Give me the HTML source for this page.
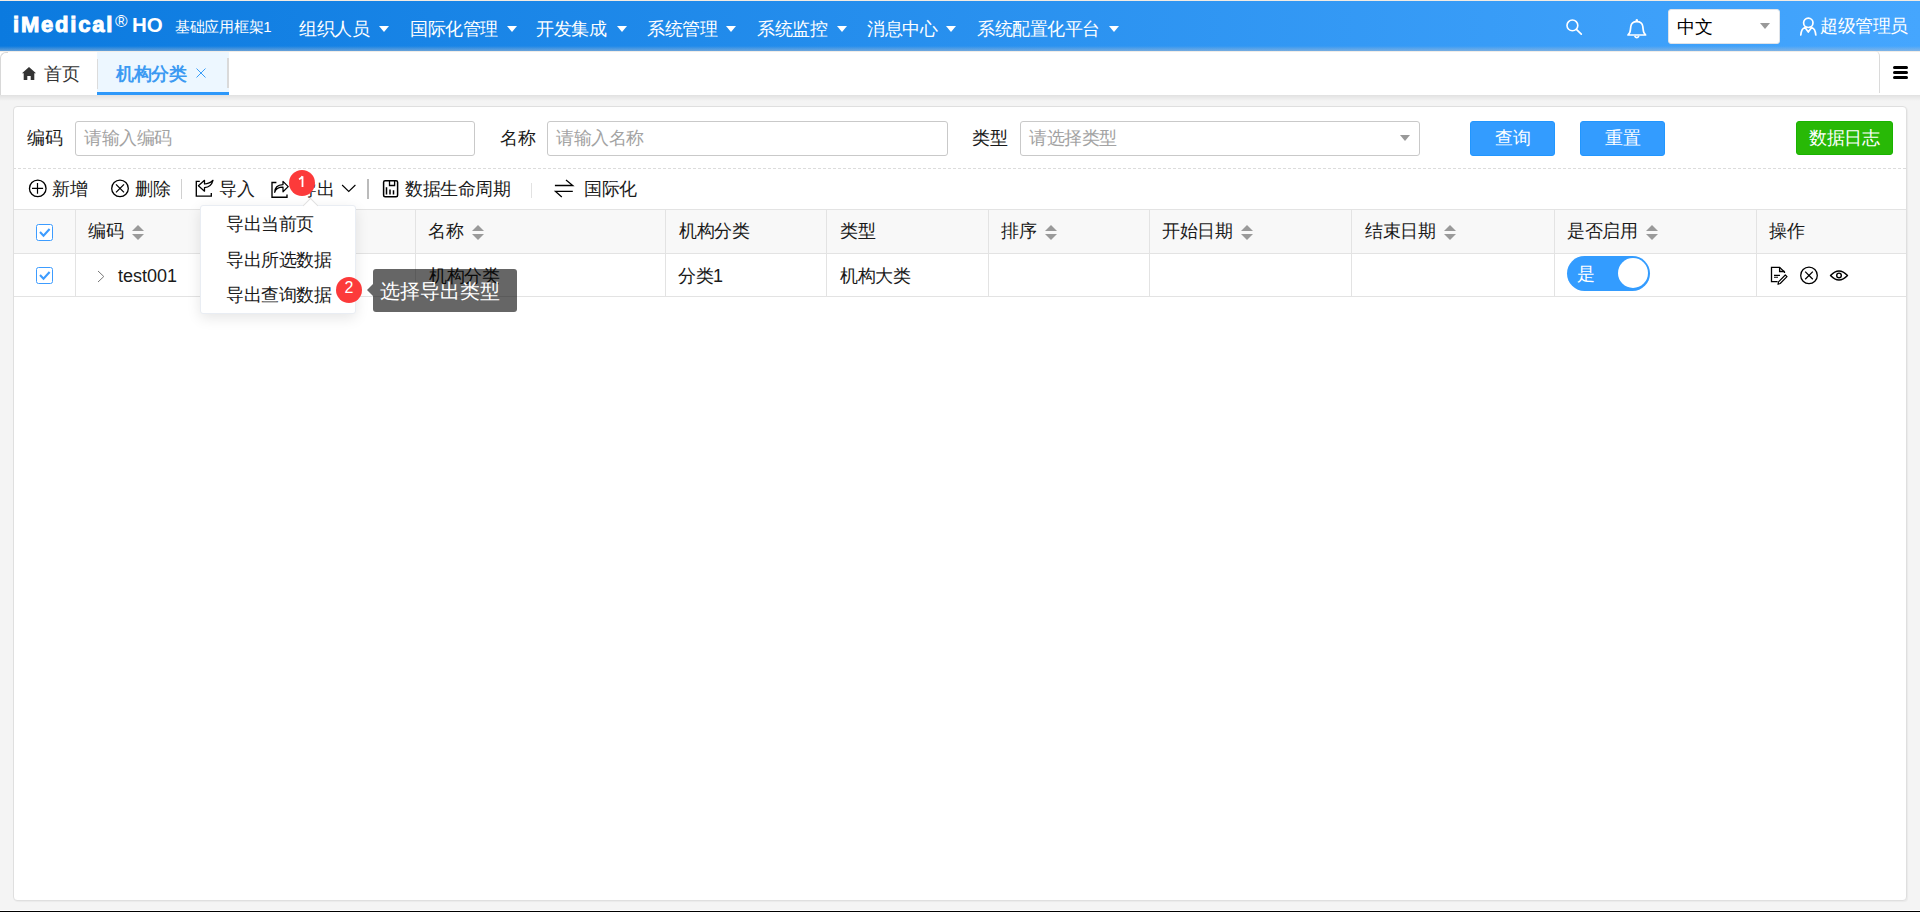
<!DOCTYPE html>
<html><head><meta charset="utf-8">
<style>
*{box-sizing:border-box;margin:0;padding:0}
html,body{width:1920px;height:912px;overflow:hidden}
body{position:relative;background:#f4f4f4;font-family:"Liberation Sans",sans-serif;color:#1a1a1a;font-size:18px}
.a{position:absolute;white-space:nowrap;line-height:1;letter-spacing:-0.5px}
.w{color:#fff}
svg{position:absolute;overflow:visible}
#topline{left:0;top:0;width:1920px;height:1px;background:#f2ebe3}
#hdr{left:0;top:1px;width:1920px;height:50px;background:linear-gradient(to right,#0b7adf,#45a6fe)}
#hdrshade{left:0;top:46px;width:1920px;height:5px;background:linear-gradient(to bottom,rgba(190,195,205,0),rgba(190,195,205,.5))}
.tri{position:absolute;width:0;height:0;border-left:5px solid transparent;border-right:5px solid transparent;border-top:6px solid #fff}
#tabbar{left:0;top:51px;width:1920px;height:44px;background:#fff}
#tabshadow{left:0;top:95px;width:1920px;height:6px;background:linear-gradient(to bottom,rgba(0,0,0,.08),rgba(0,0,0,0))}
#card{left:13px;top:106px;width:1894px;height:795px;background:#fff;border:1px solid #dfdfdf;border-radius:4px;box-shadow:1px 1px 1px rgba(0,0,0,.04)}
#bottomw{left:0;top:910px;width:1920px;height:1px;background:#fff}
#bottomb{left:0;top:911px;width:1920px;height:1px;background:#000}
.inp{position:absolute;height:35px;top:121px;border:1px solid #c9c9c9;border-radius:3px;background:#fff}
.ph{color:#a3a3a3}
.btn{position:absolute;top:121px;height:35px;border-radius:3px;background:#339cff;border:1px solid #2196ff}
.sep{position:absolute;width:1px;background:#d0d0d0}
.th{position:absolute;top:222px}
.sort{position:absolute;width:12px;height:15px;top:225px}
.sort:before{content:"";position:absolute;left:0;top:0;border-left:6px solid transparent;border-right:6px solid transparent;border-bottom:6px solid #9a9a9a}
.sort:after{content:"";position:absolute;left:0;top:9px;border-left:6px solid transparent;border-right:6px solid transparent;border-top:6px solid #9a9a9a}
.vl{position:absolute;width:1px;background:#e3e3e3}
.cb{position:absolute;left:36px;width:17px;height:17px;border:1.5px solid #3d9cff;border-radius:2.5px;background:#fff}
</style></head><body>
<div id="topline" class="a"></div>
<div id="hdr" class="a"></div>
<div id="hdrshade" class="a"></div>

<!-- logo -->
<div class="a w" style="left:13px;top:14px;font-size:22px;font-weight:bold;letter-spacing:1.8px;-webkit-text-stroke:1px #fff">iMedical</div>
<div class="a w" style="left:115px;top:13px;font-size:17px;letter-spacing:0">&#174;</div>
<div class="a w" style="left:132px;top:15px;font-size:20.5px;font-weight:bold;letter-spacing:0">HO</div>
<div class="a w" style="left:175px;top:19px;font-size:15px;letter-spacing:-0.3px">基础应用框架1</div>

<!-- menu -->
<div class="a w" style="left:299px;top:20px">组织人员</div><div class="tri" style="left:379px;top:26px"></div>
<div class="a w" style="left:410px;top:20px">国际化管理</div><div class="tri" style="left:507px;top:26px"></div>
<div class="a w" style="left:536px;top:20px">开发集成</div><div class="tri" style="left:617px;top:26px"></div>
<div class="a w" style="left:647px;top:20px">系统管理</div><div class="tri" style="left:726px;top:26px"></div>
<div class="a w" style="left:757px;top:20px">系统监控</div><div class="tri" style="left:837px;top:26px"></div>
<div class="a w" style="left:867px;top:20px">消息中心</div><div class="tri" style="left:946px;top:26px"></div>
<div class="a w" style="left:977px;top:20px">系统配置化平台</div><div class="tri" style="left:1109px;top:26px"></div>

<!-- search icon -->
<svg style="left:1560px;top:15px" width="30" height="25" viewBox="0 0 30 25">
<circle cx="12.4" cy="10.4" r="5.4" fill="none" stroke="#fff" stroke-width="1.6"/>
<line x1="16.4" y1="14.4" x2="21.3" y2="19.2" stroke="#fff" stroke-width="1.7" stroke-linecap="round"/>
</svg>
<!-- bell -->
<svg style="left:1620px;top:15.8px" width="30" height="25" viewBox="0 0 30 25">
<path d="M8 19 L9.8 16.5 C10.5 14 10.6 12 10.8 10.5 C11.2 7.5 13.5 5.6 16.8 5.6 C20.1 5.6 22.4 7.5 22.8 10.5 C23 12 23.1 14 23.8 16.5 L25.6 19 Z" fill="none" stroke="#fff" stroke-width="1.7" stroke-linejoin="round"/>
<path d="M14.6 20 Q16.8 23.2 19 20" fill="none" stroke="#fff" stroke-width="1.6"/>
<circle cx="16.8" cy="4.2" r="1.2" fill="#fff"/>
</svg>
<!-- lang select -->
<div class="a" style="left:1668px;top:9px;width:112px;height:35px;background:#fff;border:1px solid #dfe3e8;border-radius:3px"></div>
<div class="a" style="left:1677px;top:18px;color:#000">中文</div>
<div class="a" style="left:1760px;top:23px;width:0;height:0;border-left:5px solid transparent;border-right:5px solid transparent;border-top:6px solid #999"></div>
<!-- user -->
<svg style="left:1795px;top:14px" width="26" height="25" viewBox="0 0 26 25">
<circle cx="13.3" cy="8.8" r="4.7" fill="none" stroke="#fff" stroke-width="1.7"/>
<path d="M5.8 21 C6.2 16.5 8 14 10 13.5 L13.3 18 L16.6 13.5 C18.6 14 20.4 16.5 20.8 21" fill="none" stroke="#fff" stroke-width="1.7" stroke-linecap="round" stroke-linejoin="round"/>
</svg>
<div class="a w" style="left:1820px;top:17px">超级管理员</div>

<!-- tabbar -->
<div id="tabbar" class="a"></div>
<div id="tabshadow" class="a"></div>
<div class="a" style="left:0;top:51px;width:1920px;height:1px;background:#f1ede8"></div>
<div class="a" style="left:0;top:52px;width:8px;height:43px;border-left:1px solid #d8d8d8;border-top:1px solid #d8d8d8;border-top-left-radius:6px"></div>
<svg style="left:21px;top:66px" width="16" height="15" viewBox="0 0 16 15">
<path d="M1 7.2 L8 1 L15 7.2 L13.3 7.2 L13.3 14 L9.7 14 L9.7 10 L6.3 10 L6.3 14 L2.7 14 L2.7 7.2 Z" fill="#333"/>
</svg>
<div class="a" style="left:44px;top:65px;color:#333">首页</div>
<div class="a" style="left:97px;top:52px;width:132px;height:43px;background:#edf7ff;border-bottom:3px solid #2d98fa"></div>
<div class="a" style="left:97px;top:59px;width:1px;height:30px;background:#dcdcdc"></div>
<div class="a" style="left:227px;top:58px;width:2px;height:30px;background:#dadada"></div>
<div class="a" style="left:116px;top:65px;color:#3c9af2;font-weight:bold">机构分类</div>
<svg style="left:195px;top:67px" width="12" height="12" viewBox="0 0 12 12">
<path d="M1.5 1.5 L10.5 10.5 M10.5 1.5 L1.5 10.5" stroke="#3a9ef8" stroke-width="1"/>
</svg>
<div class="a" style="left:1871px;top:51px;width:9px;height:42px;border-right:1px solid #dadada;border-top-right-radius:5px"></div>
<div class="a" style="left:1893px;top:66px;width:15px;height:3px;background:#000;border-radius:1.5px"></div>
<div class="a" style="left:1893px;top:71px;width:15px;height:3px;background:#000;border-radius:1.5px"></div>
<div class="a" style="left:1893px;top:76px;width:15px;height:3px;background:#000;border-radius:1.5px"></div>

<!-- card -->
<div id="card" class="a"></div>

<!-- form -->
<div class="a" style="left:27px;top:129px">编码</div>
<div class="inp" style="left:75px;width:400px"></div>
<div class="a ph" style="left:84px;top:129px">请输入编码</div>
<div class="a" style="left:500px;top:129px">名称</div>
<div class="inp" style="left:547px;width:401px"></div>
<div class="a ph" style="left:556px;top:129px">请输入名称</div>
<div class="a" style="left:972px;top:129px">类型</div>
<div class="inp" style="left:1020px;width:400px"></div>
<div class="a ph" style="left:1029px;top:129px">请选择类型</div>
<div class="a" style="left:1400px;top:135px;width:0;height:0;border-left:5px solid transparent;border-right:5px solid transparent;border-top:6px solid #999"></div>
<div class="btn" style="left:1470px;width:85px"></div>
<div class="a w" style="left:1495px;top:129px">查询</div>
<div class="btn" style="left:1580px;width:85px"></div>
<div class="a w" style="left:1605px;top:129px">重置</div>
<div class="btn" style="left:1796px;width:97px;height:34px;background:#28b906;border-color:#19b300"></div>
<div class="a w" style="left:1809px;top:129px">数据日志</div>
<div class="a" style="left:14px;top:168px;width:1892px;height:1px;background-image:linear-gradient(to right,#dcdcdc 3px,transparent 3px);background-size:5px 1px;background-position:-1px 0"></div>

<!-- toolbar -->
<svg style="left:24px;top:176px" width="30" height="26" viewBox="0 0 30 26">
<circle cx="13.75" cy="12.4" r="8.3" fill="none" stroke="#000" stroke-width="1.3"/>
<path d="M8 12.4 H19.1 M13.5 7 V17.8" stroke="#000" stroke-width="1.2"/>
</svg>
<div class="a" style="left:52px;top:180px">新增</div>
<svg style="left:106px;top:176px" width="30" height="26" viewBox="0 0 30 26">
<circle cx="14" cy="12.4" r="8.3" fill="none" stroke="#000" stroke-width="1.3"/>
<path d="M10 8.4 L18 16.4 M18 8.4 L10 16.4" stroke="#000" stroke-width="1.3"/>
</svg>
<div class="a" style="left:135px;top:180px">删除</div>
<div class="sep" style="left:181px;top:179px;height:20px"></div>
<svg style="left:190px;top:174px" width="30" height="30" viewBox="0 0 30 30">
<path d="M9.8 7.3 H6.3 V22.1 H21.3 V19.1" fill="none" stroke="#000" stroke-width="1.35"/>
<path d="M23 6.3 C20 9.3 17.3 9.9 14.5 10 L14.5 6.3 L8.4 11.7 L14.5 17.2 L14.5 13.6 C18.3 13.3 21.8 11 23 6.3 Z" fill="none" stroke="#000" stroke-width="1.25" stroke-linejoin="round"/>
</svg>
<div class="a" style="left:219px;top:180px">导入</div>
<svg style="left:266px;top:174px" width="30" height="30" viewBox="0 0 30 30">
<path d="M10.4 8.5 H6 V23.2 H21 V20.5" fill="none" stroke="#000" stroke-width="1.35"/>
<path d="M8.7 18.4 C9.6 14.5 12.8 13.2 17 13.2 L17 17.8 L22.2 12.6 L17 7.4 L17 10.6 C12 10.8 8.7 13.5 8.7 18.4 Z" fill="none" stroke="#000" stroke-width="1.25" stroke-linejoin="round"/>
</svg>
<div class="a" style="left:299px;top:180px">导出</div>
<svg style="left:336px;top:178px" width="26" height="20" viewBox="0 0 26 20">
<path d="M6.1 7 L12.75 13.5 L19.4 7" fill="none" stroke="#000" stroke-width="1.1"/>
</svg>
<div class="sep" style="left:367px;top:179px;height:20px;width:2px;background:#bbb"></div>
<svg style="left:378px;top:176px" width="24" height="24" viewBox="0 0 24 24">
<rect x="5.6" y="4.8" width="14" height="16" rx="1.5" fill="none" stroke="#000" stroke-width="1.5"/>
<path d="M8.5 11.3 V18.6 M12 13.4 V18.6 M15.5 14.2 V18.6" stroke="#000" stroke-width="1.5"/>
<path d="M11.5 4.8 V9.5 H16.6 V4.8" fill="none" stroke="#000" stroke-width="1.3"/>
</svg>
<div class="a" style="left:405px;top:180px">数据生命周期</div>
<div class="sep" style="left:531px;top:183px;height:15px;background:#e2e2e2"></div>
<svg style="left:545px;top:174px" width="40" height="30" viewBox="0 0 40 30">
<path d="M9.9 11.5 H27.8 L21 5.9 M27.8 17.4 H10.5 L16.8 23" fill="none" stroke="#000" stroke-width="1.3" stroke-linejoin="miter"/>
</svg>
<div class="a" style="left:584px;top:180px">国际化</div>

<!-- table -->
<div class="a" style="left:14px;top:209px;width:1892px;height:45px;background:#f8f8f8;border-top:1px solid #e3e3e3;border-bottom:1px solid #e3e3e3"></div>
<div class="a" style="left:14px;top:296px;width:1892px;height:1px;background:#e3e3e3"></div>
<div class="vl" style="left:75px;top:210px;height:86px"></div>
<div class="vl" style="left:415px;top:210px;height:86px"></div>
<div class="vl" style="left:665px;top:210px;height:86px"></div>
<div class="vl" style="left:826px;top:210px;height:86px"></div>
<div class="vl" style="left:988px;top:210px;height:86px"></div>
<div class="vl" style="left:1149px;top:210px;height:86px"></div>
<div class="vl" style="left:1351px;top:210px;height:86px"></div>
<div class="vl" style="left:1554px;top:210px;height:86px"></div>
<div class="vl" style="left:1756px;top:210px;height:86px"></div>

<div class="cb" style="top:224px"></div>
<svg style="left:36px;top:224px" width="17" height="17" viewBox="0 0 17 17"><path d="M4 8.1 L7.5 11.7 L13.6 5" fill="none" stroke="#3d9cff" stroke-width="2.1"/></svg>
<div class="cb" style="top:267px"></div>
<svg style="left:36px;top:267px" width="17" height="17" viewBox="0 0 17 17"><path d="M4 8.1 L7.5 11.7 L13.6 5" fill="none" stroke="#3d9cff" stroke-width="2.1"/></svg>

<div class="th a" style="left:88px">编码</div><div class="sort" style="left:132px"></div>
<div class="th a" style="left:428px">名称</div><div class="sort" style="left:472px"></div>
<div class="th a" style="left:679px">机构分类</div>
<div class="th a" style="left:840px">类型</div>
<div class="th a" style="left:1001px">排序</div><div class="sort" style="left:1045px"></div>
<div class="th a" style="left:1162px">开始日期</div><div class="sort" style="left:1241px"></div>
<div class="th a" style="left:1365px">结束日期</div><div class="sort" style="left:1444px"></div>
<div class="th a" style="left:1567px">是否启用</div><div class="sort" style="left:1646px"></div>
<div class="th a" style="left:1769px">操作</div>

<svg style="left:94px;top:268px" width="14" height="18" viewBox="0 0 14 18"><path d="M4 3 L9.8 8.5 L4 14" fill="none" stroke="#777" stroke-width="1"/></svg>
<div class="a" style="left:118px;top:267px;letter-spacing:0">test001</div>
<div class="a" style="left:429px;top:267px">机构分类</div>
<div class="a" style="left:678px;top:267px">分类1</div>
<div class="a" style="left:840px;top:267px">机构大类</div>
<div class="a" style="left:1567px;top:256px;width:83px;height:35px;border-radius:17.5px;background:#339cff"></div>
<div class="a" style="left:1618px;top:258px;width:30px;height:30px;border-radius:50%;background:#fff"></div>
<div class="a w" style="left:1577px;top:265px">是</div>

<svg style="left:1766px;top:262px" width="26" height="26" viewBox="0 0 26 26">
<path d="M11.6 19.7 H5.5 V5.3 H13.6 L18.5 10 V11" fill="none" stroke="#000" stroke-width="1.3"/>
<path d="M13.6 5.3 V9.5 H18.5" fill="none" stroke="#000" stroke-width="1.3"/>
<path d="M8 13.4 H14 M8 15.2 H12" stroke="#000" stroke-width="1.1"/>
<path d="M12 22.3 L12.5 19.8 L19.3 13 L21 14.7 L14.2 21.5 Z" fill="none" stroke="#000" stroke-width="1.2" stroke-linejoin="round"/>
</svg>
<svg style="left:1796px;top:262px" width="26" height="26" viewBox="0 0 26 26">
<circle cx="13" cy="13.4" r="8.3" fill="none" stroke="#000" stroke-width="1.3"/>
<path d="M9.2 9.6 L16.8 17.2 M16.8 9.6 L9.2 17.2" stroke="#000" stroke-width="1.3"/>
</svg>
<svg style="left:1826px;top:262px" width="26" height="26" viewBox="0 0 26 26">
<path d="M4.5 13.5 Q13 4.5 21.5 13.5 Q13 22.5 4.5 13.5 Z" fill="none" stroke="#000" stroke-width="1.4" stroke-linejoin="round"/>
<circle cx="13" cy="13.4" r="2.3" fill="none" stroke="#000" stroke-width="1.4"/>
</svg>

<!-- popover -->
<div class="a" style="left:200px;top:205px;width:156px;height:109px;background:#fff;border:1px solid #e9edf3;border-radius:3px;box-shadow:0 4px 14px rgba(0,0,0,.1)"></div>
<div class="a" style="left:305px;top:199.5px;width:11px;height:11px;background:#fff;border-left:1px solid #e0e0e0;border-top:1px solid #e0e0e0;transform:rotate(45deg)"></div>
<div class="a" style="left:226px;top:215px">导出当前页</div>
<div class="a" style="left:226px;top:251px">导出所选数据</div>
<div class="a" style="left:226px;top:286px">导出查询数据</div>

<!-- badges -->
<div class="a" style="left:289px;top:170px;width:26px;height:26px;border-radius:50%;background:#fc3a3a"></div>
<svg style="left:285px;top:166px" width="35" height="34" viewBox="0 0 35 34"><path d="M17.5 10.2 V21.1 M14 13.3 C15.6 12.6 16.8 11.6 17.5 10.2" fill="none" stroke="#fff" stroke-width="1.8"/></svg>
<div class="a" style="left:336px;top:277px;width:26px;height:26px;border-radius:50%;background:#fc3a3a"></div>
<div class="a w" style="left:343px;top:280px;font-size:16px;width:12px;text-align:center;letter-spacing:0">2</div>

<!-- tooltip -->
<div class="a" style="left:373px;top:269px;width:144px;height:43px;background:rgba(0,0,0,.6);border-radius:3px"></div>
<div class="a" style="left:367px;top:284px;width:0;height:0;border-top:6px solid transparent;border-bottom:6px solid transparent;border-right:6px solid rgba(0,0,0,.6)"></div>
<div class="a w" style="left:380px;top:281px;font-size:20px;letter-spacing:0">选择导出类型</div>

<div id="bottomw" class="a"></div>
<div id="bottomb" class="a"></div>
</body></html>
